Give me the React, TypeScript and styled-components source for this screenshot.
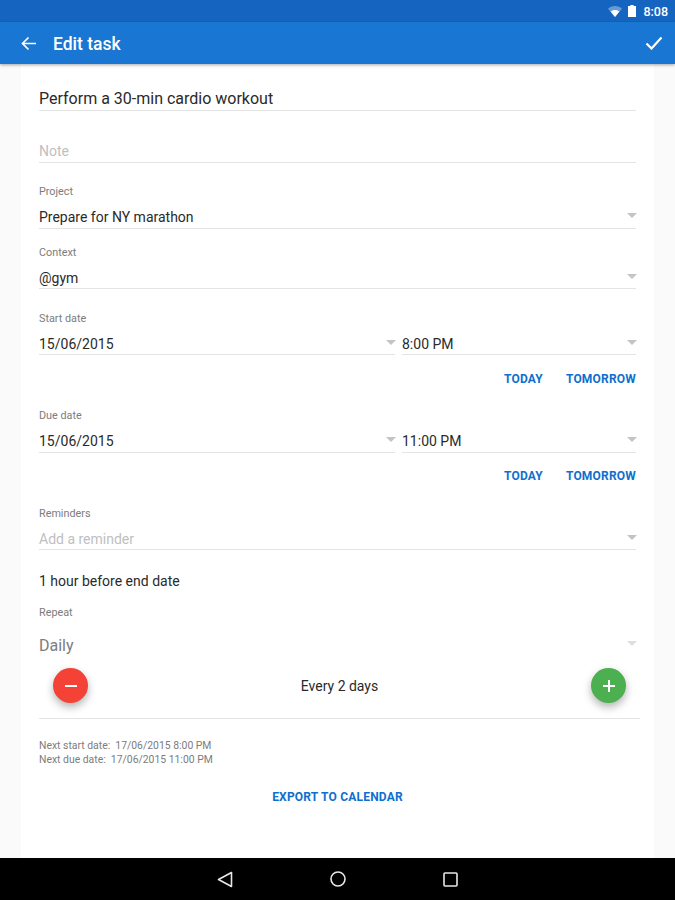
import React from "react";
import styled, { createGlobalStyle } from "styled-components";

const Global = createGlobalStyle`
  html, body { margin: 0; padding: 0; background: #fafafa; }
  body { font-family: Roboto, "Liberation Sans", sans-serif; }
  * { box-sizing: border-box; }
`;

const Screen = styled.div`
  width: 675px;
  height: 900px;
  display: flex;
  flex-direction: column;
  background: #fafafa;
  overflow: hidden;
`;
const StatusBar = styled.div`
  height: 22px;
  flex: none;
  background: #1565c0;
  display: flex;
  align-items: center;
  justify-content: flex-end;
  gap: 6px;
  padding-right: 7px;
`;
const Clock = styled.span`
  color: #fff;
  font-size: 12.5px;
  font-weight: 500;
  margin-left: 1px;
`;
const Toolbar = styled.header`
  height: 42px;
  flex: none;
  background: #1976d2;
  display: flex;
  align-items: center;
  padding: 0 12px 0 21px;
  box-shadow: 0 1px 3px rgba(0, 0, 0, 0.35);
  position: relative;
  z-index: 1;
`;
const Title = styled.h1`
  margin: 0 0 0 17px;
  padding-top: 2px;
  flex: 1;
  font-size: 17.5px;
  font-weight: 500;
  color: #fff;
`;
const Card = styled.main`
  flex: 1;
  margin: 0 21px;
  background: #fff;
  padding: 21px 18px 0;
  display: flex;
  flex-direction: column;
`;
const Line = styled.div<{ $h?: number; $top?: number; $size?: number; $color?: string; $drop?: number }>`
  height: ${(p) => p.$h ?? 24}px;
  margin-top: ${(p) => p.$top ?? 0}px;
  padding-top: ${(p) => p.$drop ?? 0}px;
  font-size: ${(p) => p.$size ?? 14}px;
  color: ${(p) => p.$color ?? "#2a2a2a"};
  border-bottom: 1px solid #e4e4e4;
  display: flex;
  align-items: center;
  justify-content: space-between;
  flex: none;
  min-width: 0;
`;
const Label = styled.div<{ $top: number }>`
  height: 14px;
  margin-top: ${(p) => p.$top}px;
  line-height: 14px;
  font-size: 10.8px;
  color: #7c7c7c;
  flex: none;
`;
const Arrow = styled.span<{ $light?: boolean }>`
  width: 0;
  height: 0;
  border-left: 5px solid transparent;
  border-right: 5px solid transparent;
  border-top: 5px solid ${(p) => (p.$light ? "#dedede" : "#c4c4c4")};
  margin-right: -1px;
  margin-top: -3px;
`;
const DateRow = styled.div<{ $top: number }>`
  display: grid;
  grid-template-columns: 356px 234px;
  column-gap: 7px;
  margin-top: ${(p) => p.$top}px;
  flex: none;
`;
const Quick = styled.div<{ $top: number }>`
  height: 20px;
  margin-top: ${(p) => p.$top}px;
  display: flex;
  justify-content: flex-end;
  align-items: center;
  gap: 23px;
  flex: none;
`;
const LinkText = styled.span`
  font-size: 12px;
  font-weight: 700;
  color: #0f6fce;
  letter-spacing: 0.2px;
`;
const Plain = styled.div`
  height: 18px;
  margin-top: 22px;
  line-height: 18px;
  font-size: 14px;
  color: #2a2a2a;
  flex: none;
`;
const Repeat = styled.div`
  height: 22px;
  margin-top: 14px;
  display: flex;
  align-items: center;
  justify-content: space-between;
  font-size: 16px;
  color: #7c7c7c;
  flex: none;
`;
const Stepper = styled.div`
  height: 51px;
  margin-top: 12px;
  margin-right: -4px;
  padding: 0 14px 15px;
  border-bottom: 1px solid #e4e4e4;
  display: flex;
  align-items: center;
  justify-content: space-between;
  font-size: 14px;
  color: #2a2a2a;
  flex: none;
`;
const Fab = styled.span<{ $bg: string }>`
  width: 35px;
  height: 35px;
  border-radius: 50%;
  background: ${(p) => p.$bg};
  box-shadow: 0 4px 8px rgba(0, 0, 0, 0.3);
  display: flex;
  align-items: center;
  justify-content: center;
`;
const Next = styled.div`
  margin-top: 20px;
  font-size: 10.4px;
  line-height: 14px;
  color: #7c7c7c;
  flex: none;
`;
const Export = styled.div`
  height: 20px;
  margin-top: 20px;
  display: flex;
  align-items: center;
  justify-content: center;
  flex: none;
`;
const NavBar = styled.nav`
  height: 42px;
  flex: none;
  background: #000;
  display: flex;
  align-items: center;
  justify-content: center;
  gap: 97px;
`;

export default function App() {
  return (
    <Screen>
      <Global />
      <StatusBar>
        <svg width="14" height="11" viewBox="0 0 14 11">
          <path d="M0 2.8C2 1 4.400 0 7 0s5 1 7 2.800L7 11z" fill="#fff" fillOpacity=".35" />
          <path d="M2.600 5.600C3.800 4.600 5.300 4 7 4s3.200.6 4.400 1.600L7 11z" fill="#fff" />
        </svg>
        <svg width="8" height="12" viewBox="0 0 8 12">
          <path d="M2.500 0h3v1H8v11H0V1h2.500z" fill="#fff" />
          <path d="M2.500 0h3v1H8v2H0V1h2.500z" fill="#fff" fillOpacity=".45" />
        </svg>
        <Clock>8:08</Clock>
      </StatusBar>
      <Toolbar>
        <svg width="15" height="15" viewBox="0 0 15 15" fill="none" stroke="#fff" strokeWidth="1.700">
          <path d="M15 7.500H1.500M7.500 1.500l-6 6 6 6" />
        </svg>
        <Title>Edit task</Title>
        <svg width="18" height="14" viewBox="0 0 18 14" fill="none" stroke="#fff" strokeWidth="2.200">
          <path d="M1.500 7.500l5 5L16.500 1.500" />
        </svg>
      </Toolbar>
      <Card>
        <Line $h={26} $size={16} $drop={2}>Perform a 30-min cardio workout</Line>
        <Line $h={26} $top={26} $color="#c0c0c0" $drop={2}>Note</Line>
        <Label $top={22}>Project</Label>
        <Line $top={6}>Prepare for NY marathon<Arrow /></Line>
        <Label $top={17}>Context</Label>
        <Line $top={5} $drop={2}>@gym<Arrow /></Line>
        <Label $top={23}>Start date</Label>
        <DateRow $top={5}>
          <Line $drop={2}>15/06/2015<Arrow /></Line>
          <Line $drop={2}>8:00 PM<Arrow /></Line>
        </DateRow>
        <Quick $top={14}><LinkText>TODAY</LinkText><LinkText>TOMORROW</LinkText></Quick>
        <Label $top={20}>Due date</Label>
        <DateRow $top={6}>
          <Line $drop={1}>15/06/2015<Arrow /></Line>
          <Line $drop={1}>11:00 PM<Arrow /></Line>
        </DateRow>
        <Quick $top={13}><LinkText>TODAY</LinkText><LinkText>TOMORROW</LinkText></Quick>
        <Label $top={21}>Reminders</Label>
        <Line $top={5} $color="#c0c0c0" $drop={2}>Add a reminder<Arrow /></Line>
        <Plain>1 hour before end date</Plain>
        <Label $top={16}>Repeat</Label>
        <Repeat>Daily<Arrow $light /></Repeat>
        <Stepper>
          <Fab $bg="#f44336">
            <svg width="12" height="2" viewBox="0 0 12 2"><rect width="12" height="2" fill="#fff" /></svg>
          </Fab>
          Every 2 days
          <Fab $bg="#4caf50">
            <svg width="12" height="12" viewBox="0 0 12 12"><path d="M5 0h2v5h5v2H7v5H5V7H0V5h5z" fill="#fff" /></svg>
          </Fab>
        </Stepper>
        <Next>
          Next start date:&nbsp; 17/06/2015 8:00 PM
          <br />
          Next due date:&nbsp; 17/06/2015 11:00 PM
        </Next>
        <Export><LinkText>EXPORT TO CALENDAR</LinkText></Export>
      </Card>
      <NavBar>
        <svg width="16" height="17" viewBox="0 0 16 17" fill="none" stroke="#e8e8e8" strokeWidth="1.600" strokeLinejoin="round">
          <path d="M14.500 1.500v14L1.500 8.500z" />
        </svg>
        <svg width="16" height="16" viewBox="0 0 16 16" fill="none" stroke="#e8e8e8" strokeWidth="1.600">
          <circle cx="8" cy="8" r="7" />
        </svg>
        <svg width="15" height="15" viewBox="0 0 15 15" fill="none" stroke="#e8e8e8" strokeWidth="1.600" strokeLinejoin="round">
          <rect x="1" y="1" width="13" height="13" rx="1" />
        </svg>
      </NavBar>
    </Screen>
  );
}
